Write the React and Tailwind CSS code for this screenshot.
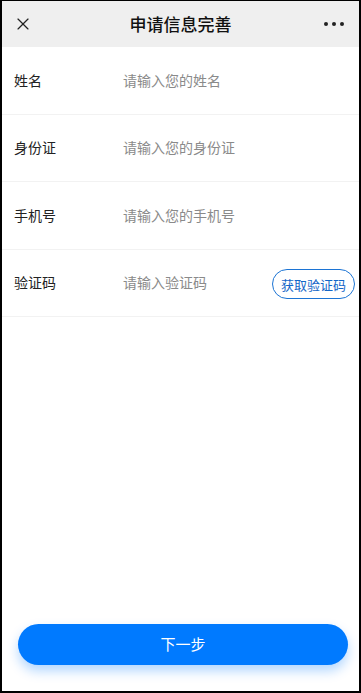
import { X } from 'lucide-react';

const fields = [
  { label: '姓名', placeholder: '请输入您的姓名' },
  { label: '身份证', placeholder: '请输入您的身份证' },
  { label: '手机号', placeholder: '请输入您的手机号' },
  { label: '验证码', placeholder: '请输入验证码', code: true },
];

export default function App() {
  return (
    <div
      className="flex flex-col h-[693px] w-[361px] bg-white border-x-2 border-b-2 border-t border-black overflow-hidden"
      style={{ fontFamily: '"Noto Sans CJK SC", "Noto Sans", sans-serif' }}
    >
      {/* Header */}
      <div className="h-[46px] shrink-0 bg-[#efefef] flex items-center justify-between pl-[11px] pr-3">
        <X className="w-[20px] h-[20px] text-[#222]" strokeWidth={1.4} />
        <span className="text-[17px] font-medium text-[#111] ml-[4px]">申请信息完善</span>
        <div className="flex gap-[4px] pr-[3px]">
          <span className="w-[4px] h-[4px] rounded-full bg-[#222]" />
          <span className="w-[4px] h-[4px] rounded-full bg-[#222]" />
          <span className="w-[4px] h-[4px] rounded-full bg-[#222]" />
        </div>
      </div>

      {/* Form */}
      <div className="flex flex-col">
        {fields.map(f => (
          <div key={f.label} className="h-[67.5px] flex items-center border-b border-[#f2f2f2] pl-3 pr-[4px]">
            <span className="w-[109px] text-[14px] text-[#222]">{f.label}</span>
            <span className="flex-1 text-[14px] text-[#8a8a8a]">{f.placeholder}</span>
            {f.code && (
              <button className="h-[30px] px-[8px] mt-[3px] rounded-full border border-[#1c74d4] text-[13px] text-[#1466c8]">
                获取验证码
              </button>
            )}
          </div>
        ))}
      </div>

      <div className="flex-1" />

      {/* Next */}
      <div className="pl-4 pr-[11px] pb-[26px]">
        <button className="w-full h-[41px] rounded-full bg-[#007aff] text-white text-[15px] shadow-[0_6px_12px_rgba(0,122,255,0.3)]">
          下一步
        </button>
      </div>
    </div>
  );
}
